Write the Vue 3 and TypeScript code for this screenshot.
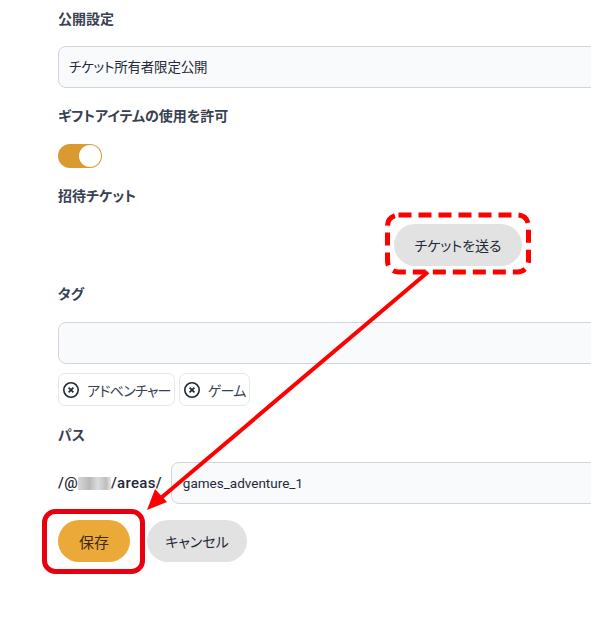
<script setup lang="ts">
const tags: string[] = ['アドベンチャー', 'ゲーム']
</script>

<template>
  <div class="page">
    <form class="form" @submit.prevent>
      <label class="label first">公開設定</label>
      <div class="input select">チケット所有者限定公開</div>

      <label class="label gift">ギフトアイテムの使用を許可</label>
      <div class="toggle"><span class="knob"></span></div>

      <label class="label invite">招待チケット</label>
      <div class="send-row">
        <button type="button" class="btn neutral send">チケットを送る</button>
      </div>

      <label class="label tag">タグ</label>
      <div class="input tag-input"></div>
      <div class="chips">
        <span v-for="t in tags" :key="t" class="chip">
          <svg class="x" width="18" height="18" viewBox="0 0 18 18" fill="none" stroke="#1f2937">
            <circle cx="9" cy="9" r="7.2" stroke-width="1.6" />
            <path d="M6.6 6.6l4.8 4.8M11.4 6.6l-4.8 4.8" stroke-width="1.7" />
          </svg>
          <span class="chip-text">{{ t }}</span>
        </span>
      </div>

      <label class="label path">パス</label>
      <div class="path-row">
        <span class="prefix">/@<span class="blur"></span>/areas/</span>
        <div class="input slug">games_adventure_1</div>
      </div>

      <div class="actions">
        <button type="button" class="btn primary">保存</button>
        <button type="button" class="btn neutral cancel">キャンセル</button>
      </div>
    </form>

    <svg class="overlay" width="591" height="618" viewBox="0 0 591 618" fill="none">
      <rect x="387.5" y="215" width="141" height="57" rx="11" stroke="#f00" stroke-width="5" stroke-dasharray="13 7" />
      <rect x="44.5" y="511.5" width="98" height="60" rx="11" stroke="#e8000f" stroke-width="5" />
      <path d="M428 272L155 503" stroke="#f00" stroke-width="4" />
      <path d="M147 510L167 502L155 489Z" fill="#f00" />
    </svg>
  </div>
</template>

<style scoped>
.page {
  position: relative;
  width: 591px;
  height: 618px;
  overflow: hidden;
  background: #fff;
  font-family: Roboto, "Noto Sans CJK JP", sans-serif;
  font-feature-settings: "palt";
  color: #1f2937;
}
.form {
  display: flex;
  flex-direction: column;
  width: 700px;
  padding: 9px 0 0 58px;
  box-sizing: border-box;
}
.label {
  display: block;
  font-size: 14px;
  line-height: 20px;
  font-weight: 700;
  color: #374151;
}
.input {
  box-sizing: border-box;
  width: 640px;
  height: 42px;
  margin-top: 17px;
  padding: 0 10px;
  border: 1px solid #d1d5db;
  border-radius: 8px;
  background: #f9fafb;
  font-size: 13.5px;
  line-height: 40px;
  color: #1f2937;
}
.select { letter-spacing: -0.2px; }
.gift { margin-top: 18px; }
.toggle {
  display: flex;
  align-items: center;
  justify-content: flex-end;
  box-sizing: border-box;
  width: 44px;
  height: 24px;
  margin-top: 18px;
  padding-right: 1px;
  border-radius: 12px;
  background: #d99a32;
}
.knob {
  width: 22px;
  height: 22px;
  border-radius: 50%;
  background: #fff;
}
.invite { margin-top: 18px; }
.send-row {
  display: flex;
  justify-content: flex-end;
  width: 464px;
  margin-top: 18px;
}
.btn {
  height: 42px;
  padding: 0;
  border: 0;
  border-radius: 21px;
  font-family: inherit;
  font-feature-settings: inherit;
  font-size: 14px;
  color: #1f2937;
}
.neutral { background: #e2e2e2; }
.send { width: 128px; }
.tag { margin-top: 18px; }
.tag-input { margin-top: 18px; }
.chips {
  display: flex;
  gap: 4px;
  margin-top: 9px;
}
.chip {
  display: flex;
  align-items: center;
  gap: 7px;
  box-sizing: border-box;
  height: 33px;
  padding: 0 3px;
  border: 1px solid #e5e7eb;
  border-radius: 7px;
  font-size: 14px;
  color: #374151;
}
.chip-text { letter-spacing: -0.7px; }
.x { flex: none; }
.path { margin-top: 19px; }
.path-row {
  display: flex;
  align-items: center;
  gap: 9px;
  margin-top: 17px;
}
.prefix {
  display: flex;
  align-items: center;
  flex: none;
  font-size: 15px;
  font-weight: 500;
  letter-spacing: 0.3px;
}
.blur {
  width: 33px;
  height: 13px;
  background: linear-gradient(90deg, #d8d8d8, #b9b9b9 35%, #dcdcdc 60%, #bfbfbf 85%, #e8e8e8);
}
.slug {
  width: 500px;
  margin-top: 0;
  padding-left: 11px;
}
.actions {
  display: flex;
  gap: 17px;
  margin-top: 16px;
}
.primary {
  width: 72px;
  background: #eba93a;
  color: #3b2a12;
  font-size: 15px;
}
.cancel { width: 100px; }
.overlay {
  position: absolute;
  inset: 0;
  pointer-events: none;
}
</style>
